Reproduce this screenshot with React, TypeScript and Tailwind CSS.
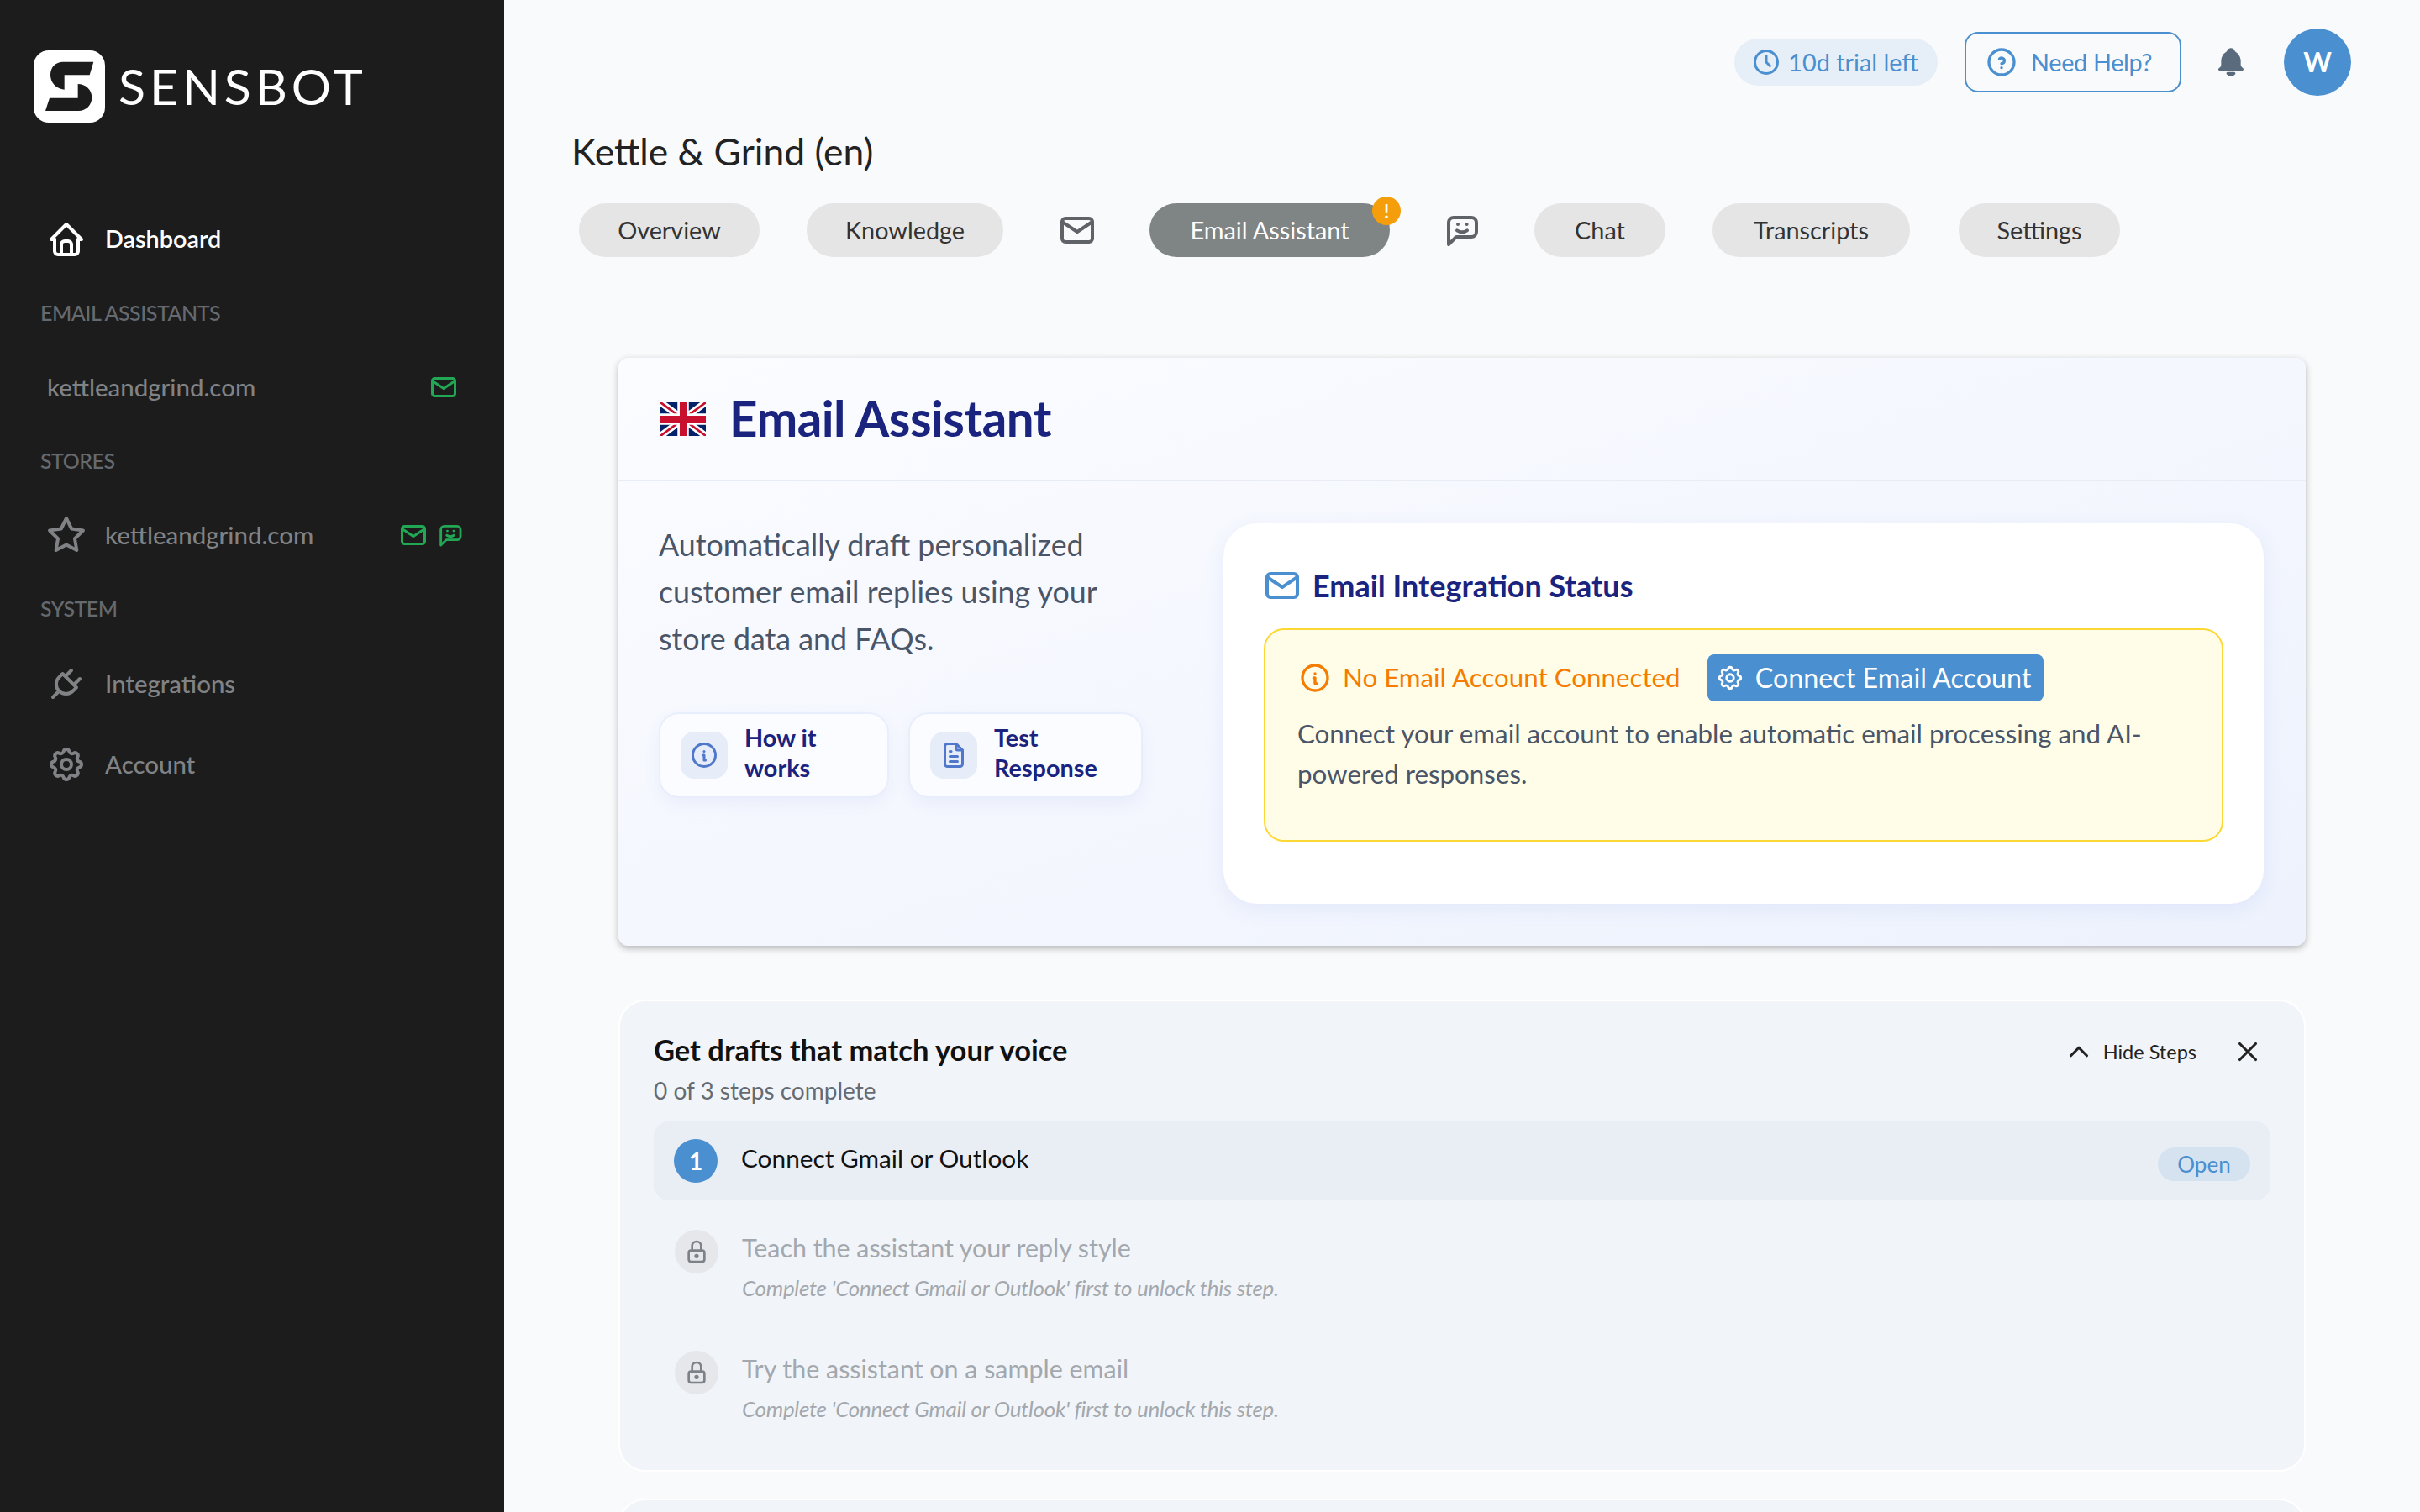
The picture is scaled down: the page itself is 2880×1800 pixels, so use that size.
import { ReactNode } from "react"
import {
  TbBellFilled,
  TbChevronUp,
  TbClock,
  TbFileText,
  TbHelpCircle,
  TbHome,
  TbInfoCircle,
  TbLock,
  TbMail,
  TbPlug,
  TbSettings,
  TbStar,
  TbX,
} from "react-icons/tb"

function Logo() {
  return (
    <svg viewBox="30 30 255 258" className="w-[85px] h-[86px] shrink-0">
      <rect x="30" y="30" width="255" height="258" rx="54" fill="#ffffff" />
      <path d="M244 71H135C108 71 90 90 90 118C90 145 110 168 140 170V118H230Z" fill="#1c1c1c" />
      <path d="M188 150C215 150 238 170 238 198C238 225 218 246 190 246H72L87 200H188Z" fill="#1c1c1c" />
    </svg>
  )
}

function UkFlag() {
  return (
    <svg viewBox="0 0 60 45" preserveAspectRatio="none" className="w-[54px] h-[40px] shrink-0">
      <rect width="60" height="45" fill="#012169" />
      <path d="M0 0L60 45M60 0L0 45" stroke="#ffffff" strokeWidth="9" />
      <path d="M0 0L60 45M60 0L0 45" stroke="#c8102e" strokeWidth="3" />
      <path d="M30 0V45M0 22.5H60" stroke="#ffffff" strokeWidth="15" />
      <path d="M30 0V45M0 22.5H60" stroke="#c8102e" strokeWidth="9" />
    </svg>
  )
}

// speech bubble with a smile, tail in the bottom left corner
function ChatFace({ size, className }: { size: number; className?: string }) {
  return (
    <svg width={size} height={size} viewBox="0 0 24 24" fill="none" stroke="currentColor" strokeWidth="2" strokeLinecap="round" strokeLinejoin="round" className={className}>
      <path d="M4 20.5V7.5a3 3 0 0 1 3-3h10.5a3 3 0 0 1 3 3v5.5a3 3 0 0 1-3 3H8.5Z" />
      <path d="M9.5 8.5h.01M14.8 8.5h.01" />
      <path d="M9 12.2c1.8 1.2 4.2 1.2 6 0" />
    </svg>
  )
}

function SideLabel({ children, short }: { children: ReactNode; short?: boolean }) {
  return (
    <div className={`${short ? "h-[85px] pt-[2px]" : "h-[88px]"} pl-[48px] flex items-center text-[25px] font-medium text-[#666a6e] tracking-[-0.5px]`}>
      {children}
    </div>
  )
}

function SideItem({ icon, label, active, tall, right }: { icon: ReactNode; label: string; active?: boolean; tall?: boolean; right?: ReactNode }) {
  return (
    <div
      className={`${tall ? "h-[96px]" : "h-[88px]"} pl-[54px] pr-[47px] flex items-center font-medium ${
        active ? "text-white text-[28.8px] font-semibold" : "text-[#808285] text-[29.4px]"
      }`}
    >
      <span className="w-[48px] h-[48px] ml-[1px] mr-[22px] shrink-0">{icon}</span>
      <span className="flex-1">{label}</span>
      {right}
    </div>
  )
}

function Tab({ label, width, active, badge }: { label: string; width: string; active?: boolean; badge?: boolean }) {
  return (
    <div
      className={`relative ${width} h-[64px] pt-[2px] rounded-full flex items-center justify-center text-[28.8px] ${
        active ? "bg-[#7f8484] text-white" : "bg-[#e5e5e5] text-[#333333]"
      }`}
    >
      {label}
      {badge && (
        <span className="absolute -top-[8px] -right-[13px] w-[34px] h-[34px] rounded-full bg-[#f59e0b] text-white text-[22px] font-bold flex items-center justify-center">
          !
        </span>
      )}
    </div>
  )
}

function LinkCard({ icon, lines, wide }: { icon: ReactNode; lines: string[]; wide: string }) {
  return (
    <div className={`${wide} h-[102px] pl-[24px] rounded-[24px] bg-[#fbfcff] border-2 border-[#e8eefb] shadow-[0_8px_20px_rgba(60,90,200,0.06)] flex items-center gap-[20px]`}>
      <span className="w-[56px] h-[56px] rounded-[16px] bg-[#e6ecf8] text-[#4f78cc] flex items-center justify-center shrink-0">{icon}</span>
      <span className="-mt-[6px] text-[28.8px] leading-[36px] font-bold text-[#1a237e]">
        {lines.map(l => (
          <div key={l}>{l}</div>
        ))}
      </span>
    </div>
  )
}

function LockedStep({ title, note }: { title: string; note: string }) {
  return (
    <div className="h-[144px] pl-[25px] pt-[23px] flex gap-[28px]">
      <span className="mt-[1px] w-[52px] h-[52px] rounded-full bg-[#e5e7eb] text-[#7d8288] flex items-center justify-center shrink-0">
        <TbLock size={32} />
      </span>
      <div>
        <div className="text-[30.4px] leading-[44px] text-[#a3a8ae]">{title}</div>
        <div className="mt-[8px] text-[26px] leading-[36px] italic text-[#a3a8ae] tracking-[-0.3px]">{note}</div>
      </div>
    </div>
  )
}

export default function App() {
  return (
    <div className="h-screen w-full overflow-hidden flex bg-[#f9fafc] text-[#333333] font-['Lato','Noto_Sans',sans-serif]">
      <aside className="w-[600px] h-full shrink-0 bg-[#1c1c1c]">
        <div className="h-[241px] pl-[40px] pt-[60px] flex items-start gap-[16px]">
          <Logo />
          <span className="mt-[10px] text-[59px] leading-[66px] text-white font-normal tracking-[4.9px]">SENSBOT</span>
        </div>
        <SideItem active icon={<TbHome size={48} />} label="Dashboard" />
        <SideLabel>EMAIL ASSISTANTS</SideLabel>
        <div className="h-[88px] pl-[56px] pr-[54px] flex items-center text-[29.4px] font-medium text-[#808285]">
          <span className="flex-1">kettleandgrind.com</span>
          <TbMail size={36} className="text-[#22a855]" />
        </div>
        <SideLabel>STORES</SideLabel>
        <SideItem
          icon={<TbStar size={48} />}
          label="kettleandgrind.com"
          right={
            <span className="flex items-center gap-[9px] text-[#22a855]">
              <TbMail size={36} />
              <ChatFace size={34} />
            </span>
          }
        />
        <SideLabel short>SYSTEM</SideLabel>
        <SideItem tall icon={<TbPlug size={48} />} label="Integrations" />
        <SideItem tall icon={<TbSettings size={48} />} label="Account" />
      </aside>

      <main className="flex-1 min-w-0">
        <header className="h-[148px] pr-[82px] flex items-center justify-end">
          <div className="h-[56px] pl-[20px] pr-[23px] rounded-full bg-[#e6eef8] text-[#4a8fcf] flex items-center gap-[8px] text-[28.8px]">
            <TbClock size={36} />
            <span className="pt-[2px]">10d trial left</span>
          </div>
          <div className="ml-[32px] w-[258px] h-[72px] pl-[22px] rounded-[16px] border-2 border-[#4a8fcf] text-[#4a8fcf] flex items-center gap-[15px] text-[28.8px] tracking-[-0.3px]">
            <TbHelpCircle size={40} />
            <span className="pt-[2px]">Need Help?</span>
          </div>
          <TbBellFilled size={40} className="ml-[39px] text-[#5a6b7e]" />
          <div className="ml-[43px] w-[80px] h-[80px] rounded-full bg-[#4a8fcf] text-white text-[32px] font-bold flex items-center justify-center">W</div>
        </header>

        <h1 className="-mt-[2px] ml-[80px] text-[44.4px] leading-[68px] font-normal text-[#222222]">Kettle &amp; Grind (en)</h1>

        <nav className="mt-[28px] ml-[89px] flex items-center">
          <Tab label="Overview" width="w-[215px]" />
          <span className="w-[56px]" />
          <Tab label="Knowledge" width="w-[234px]" />
          <TbMail size={48} className="ml-[64px] mr-[62px] text-[#5f6368]" />
          <Tab label="Email Assistant" width="w-[286px]" active badge />
          <ChatFace size={48} className="mx-[62px] text-[#5f6368]" />
          <Tab label="Chat" width="w-[156px]" />
          <span className="w-[56px]" />
          <Tab label="Transcripts" width="w-[235px]" />
          <span className="w-[58px]" />
          <Tab label="Settings" width="w-[192px]" />
        </nav>

        <section className="mt-[120px] mx-[136px] h-[700px] rounded-[12px] bg-gradient-to-br from-[#fbfcff] to-[#edf2fd] shadow-[0_3px_8px_rgba(0,0,0,0.28)] overflow-hidden">
          <div className="h-[147px] pl-[50px] flex items-center gap-[28px] border-b-2 border-[#e8ecf4]">
            <UkFlag />
            <h2 className="-mt-[1px] text-[58.3px] font-bold text-[#1a237e] tracking-[-0.5px]">Email Assistant</h2>
          </div>
          <div className="pl-[48px] pr-[50px] pt-[50px] flex">
            <div className="w-[672px] shrink-0">
              <p className="-mt-[2px] w-[600px] text-[35.8px] leading-[56px] text-[#4a5568]">
                Automatically draft personalized customer email replies using your store data and FAQs.
              </p>
              <div className="mt-[59px] flex gap-[23px]">
                <LinkCard wide="w-[274px]" icon={<TbInfoCircle size={36} />} lines={["How it", "works"]} />
                <LinkCard wide="w-[279px]" icon={<TbFileText size={36} />} lines={["Test", "Response"]} />
              </div>
            </div>
            <div className="flex-1 h-[453px] rounded-[40px] bg-white shadow-[0_6px_24px_rgba(60,90,200,0.08)] px-[48px] pt-[47px]">
              <div className="flex items-center gap-[12px] -ml-[2px]">
                <TbMail size={48} className="text-[#4a8fcf]" />
                <h3 className="text-[36px] font-bold text-[#1a237e]">Email Integration Status</h3>
              </div>
              <div className="mt-[24px] h-[254px] rounded-[24px] border-2 border-[#fdd835] bg-[#fffde7] pl-[38px] pt-[29px]">
                <div className="flex items-center">
                  <TbInfoCircle size={40} className="text-[#f57c00] ml-[1px]" />
                  <span className="-mt-[2px] ml-[13px] text-[31.3px] text-[#f57c00]">No Email Account Connected</span>
                  <span className="ml-[32px] w-[400px] h-[56px] rounded-[8px] bg-[#4a8fcf] text-white text-[32.3px] flex items-center gap-[13px] pl-[10px]">
                    <TbSettings size={34} />
                    Connect Email Account
                  </span>
                </div>
                <p className="mt-[14px] w-[1060px] text-[31.3px] leading-[48px] text-[#4a5568]">
                  Connect your email account to enable automatic email processing and AI-powered responses.
                </p>
              </div>
            </div>
          </div>
        </section>

        <section className="mt-[64px] mx-[136px] h-[562px] rounded-[32px] bg-[#f1f5f9] border-2 border-white px-[40px] pt-[32px]">
          <div className="flex items-start justify-between">
            <div>
              <h3 className="text-[34.5px] leading-[52px] font-bold text-[#111111]">Get drafts that match your voice</h3>
              <div className="text-[28px] leading-[44px] text-[#666b72]">0 of 3 steps complete</div>
            </div>
            <div className="mt-[9px] mr-[8px] flex items-center text-[#222222] text-[23.5px]">
              <TbChevronUp size={38} />
              <span className="ml-[10px] pt-[2px]">Hide Steps</span>
              <TbX size={38} className="ml-[42px]" />
            </div>
          </div>
          <div className="mt-[15px] h-[94px] pl-[24px] pr-[24px] rounded-[18px] bg-[#e9eef5] flex items-center">
            <span className="w-[52px] h-[52px] rounded-full bg-[#4a8fcf] text-white text-[28px] font-bold flex items-center justify-center shrink-0">1</span>
            <span className="ml-[28px] -mt-[6px] flex-1 text-[29.8px] text-[#111111]">Connect Gmail or Outlook</span>
            <span className="mt-[8px] h-[40px] w-[110px] rounded-full bg-[#d5e2f0] text-[#4a8fcf] text-[26px] flex items-center justify-center">Open</span>
          </div>
          <div className="h-[11px]" />
          <LockedStep title="Teach the assistant your reply style" note="Complete 'Connect Gmail or Outlook' first to unlock this step." />
          <LockedStep title="Try the assistant on a sample email" note="Complete 'Connect Gmail or Outlook' first to unlock this step." />
        </section>

        <section className="mt-[32px] mx-[136px] h-[120px] rounded-[32px] bg-[#f1f5f9] border-2 border-white" />
      </main>
    </div>
  )
}
